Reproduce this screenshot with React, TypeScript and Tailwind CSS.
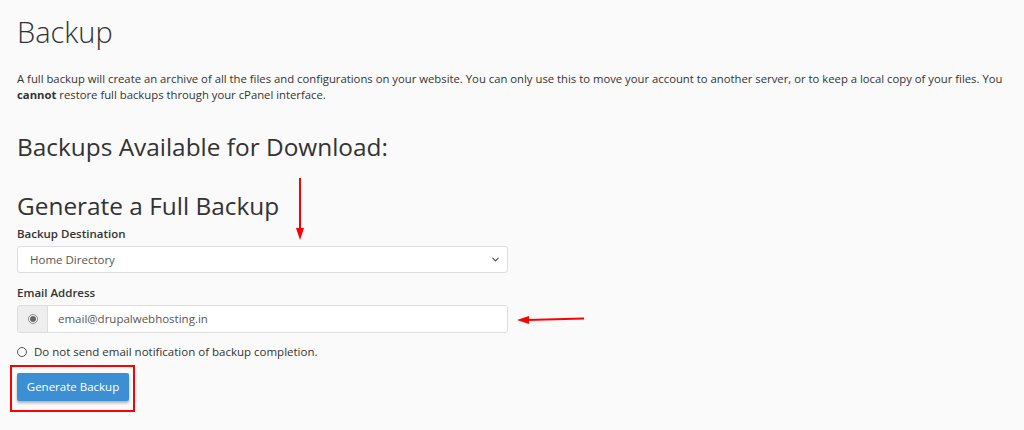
import { ChevronDown } from "lucide-react";

const font = { fontFamily: '"Open Sans", "Liberation Sans", sans-serif' };

const App = () => {
    return (
        <div className="relative w-[1024px] h-[430px] overflow-hidden bg-[#fafafa] text-[#333]" style={font}>
            <div className="pl-[17px] pr-[10px]">
                <h1 className="pt-[10px] text-[29px] leading-[44px] font-light text-[#333]">Backup</h1>

                <p className="mt-[17px] text-[11.3px] leading-[16px]">
                    A full backup will create an archive of all the files and configurations on your website. You can only use this to move your account to another server, or to keep a local copy of your files. You{" "}
                    <b className="font-bold">cannot</b> restore full backups through your cPanel interface.
                </p>

                <h2 className="mt-[26px] text-[24.4px] leading-[36px] text-[#333]">Backups Available for Download:</h2>

                <h2 className="mt-[23px] text-[24.4px] leading-[36px] text-[#333]">Generate a Full Backup</h2>

                <div className="w-[491px]">
                    <label className="block mt-[1px] text-[11.5px] leading-[18px] font-semibold">Backup Destination</label>
                    <div className="mt-[3px] h-[27px] flex items-center justify-between bg-white border border-[#ddd] rounded-[3px] pl-[12px] pr-[6px] text-[11.5px] text-[#555]">
                        <span>Home Directory</span>
                        <ChevronDown className="w-[11px] h-[11px] text-[#444]" strokeWidth={2.2} />
                    </div>

                    <label className="block mt-[11px] text-[11.5px] leading-[18px] font-semibold">Email Address</label>
                    <div className="mt-[3px] h-[28px] flex border border-[#ddd] rounded-[3px] overflow-hidden">
                        <div className="w-[30px] bg-[#eee] border-r border-[#ddd] flex items-center justify-center">
                            <span className="w-[10px] h-[10px] rounded-full border border-[#888] bg-white flex items-center justify-center">
                                <span className="w-[6px] h-[6px] rounded-full bg-[#666]" />
                            </span>
                        </div>
                        <div className="flex-1 bg-white flex items-center pl-[10px] text-[11.5px] text-[#555]">email@drupalwebhosting.in</div>
                    </div>
                </div>

                <div className="mt-[10px] flex items-center gap-[7px] text-[11.5px] leading-[18px]">
                    <span className="w-[10px] h-[10px] rounded-full border border-[#555] bg-white" />
                    <span>Do not send email notification of backup completion.</span>
                </div>

                <div className="mt-[4px] ml-[-7px] w-[125px] h-[47px] border-2 border-[#f00] pl-[5px] pt-[6px]">
                    <button className="h-[28px] w-[112px] bg-[#3d8fd4] text-white text-[11.5px] rounded-[2px] shadow-[0_2px_3px_rgba(0,0,0,0.3)]">
                        Generate Backup
                    </button>
                </div>
            </div>

            {/* annotation arrows */}
            <svg className="absolute left-0 top-0 pointer-events-none" width="1024" height="430">
                <line x1="300" y1="178" x2="300" y2="230" stroke="#f00" strokeWidth="2" />
                <polygon points="296,228 304,228 300,240" fill="#f00" />
                <line x1="584" y1="318.5" x2="527" y2="320" stroke="#f00" strokeWidth="2" />
                <polygon points="529,316 529,324 517,320" fill="#f00" />
            </svg>
        </div>
    );
};

export default App;
